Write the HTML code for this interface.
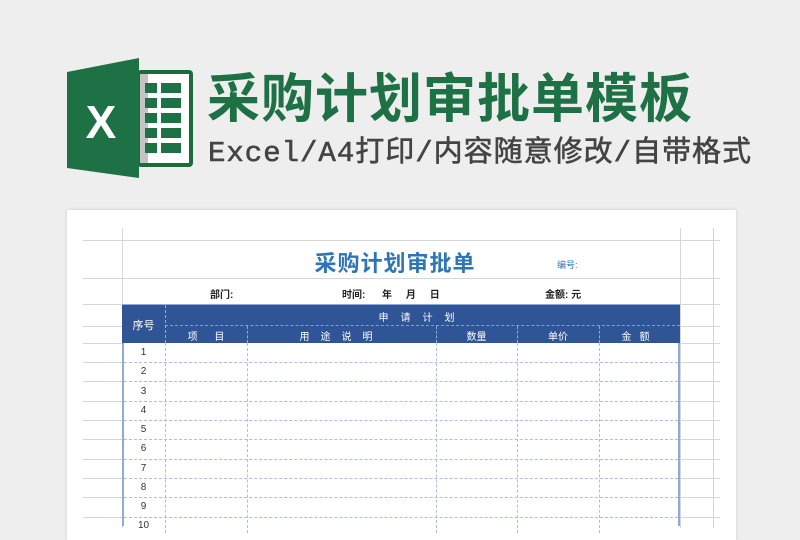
<!DOCTYPE html>
<html><head><meta charset="utf-8"><style>
*{margin:0;padding:0;box-sizing:border-box}
body{width:800px;height:526px;background:#eeeeee;position:relative;overflow:hidden;font-family:"Liberation Sans","Noto Sans CJK SC",sans-serif}
.a{position:absolute;white-space:nowrap}
.h{position:absolute;height:1px;background:#d6d6d6}
.v{position:absolute;width:1px;background:#d6d6d6}
.dh{position:absolute;height:0;border-top:1px dashed #a9bfe6}
.dv{position:absolute;width:0;border-left:1px dashed #a9bfe6}
.wd{position:absolute;width:0;border-left:1px dashed #8faee0}
.t{font-size:10px;color:#fff;position:absolute;text-align:center}
.n{position:absolute;left:122px;width:43px;text-align:center;font-size:10px;color:#333}
</style></head><body>
<svg class="a" style="left:0;top:0" width="200" height="200" viewBox="0 0 200 200">
<rect x="137" y="70" width="56" height="97" rx="4" fill="#1d6b3c"/>
<rect x="140" y="74" width="49" height="89" fill="#fff"/>
<rect x="140" y="74" width="8" height="89" fill="#c4c4c4"/>
<g fill="#1e7145">
<rect x="145" y="83" width="12" height="10"/><rect x="161" y="83" width="20" height="10"/>
<rect x="145" y="98" width="12" height="10"/><rect x="161" y="98" width="20" height="10"/>
<rect x="145" y="113" width="12" height="10"/><rect x="161" y="113" width="20" height="10"/>
<rect x="145" y="128" width="12" height="10"/><rect x="161" y="128" width="20" height="10"/>
<rect x="145" y="143" width="12" height="10"/><rect x="161" y="143" width="20" height="10"/>
</g>
<polygon points="67,72 139,58 139,178 67,168" fill="#1e7145"/>
<text x="101" y="138" font-family="Liberation Sans" font-weight="bold" font-size="46" fill="#fff" text-anchor="middle">X</text>
</svg>
<div class="a" style="left:207px;top:68px;font-size:53px;font-weight:bold;color:#1e7145;letter-spacing:1px;line-height:64px">采购计划审批单模板</div>
<div class="a" style="left:208px;top:136px;font-size:29px;color:#444;line-height:36px;font-family:'Liberation Mono','Noto Sans CJK SC',monospace;letter-spacing:1px;-webkit-text-stroke:0.6px #444">Excel/A4打印/内容随意修改/自带格式</div>

<div class="a" style="left:67px;top:210px;width:669px;height:330px;background:#fff;box-shadow:0 0 3px rgba(0,0,0,.15)"></div>
<div class="v" style="left:122px;top:228px;height:300px"></div>
<div class="v" style="left:680px;top:228px;height:300px"></div>
<div class="v" style="left:713px;top:228px;height:300px"></div>
<div class="h" style="left:83px;top:240px;width:637px"></div>
<div class="h" style="left:83px;top:278px;width:637px"></div>
<div class="h" style="left:83px;top:304px;width:637px"></div>
<div class="h" style="left:83px;top:326px;width:637px"></div>
<div class="h" style="left:83px;top:343px;width:637px"></div>
<div class="h" style="left:83px;top:362px;width:637px"></div>
<div class="h" style="left:83px;top:381px;width:637px"></div>
<div class="h" style="left:83px;top:401px;width:637px"></div>
<div class="h" style="left:83px;top:420px;width:637px"></div>
<div class="h" style="left:83px;top:439px;width:637px"></div>
<div class="h" style="left:83px;top:459px;width:637px"></div>
<div class="h" style="left:83px;top:478px;width:637px"></div>
<div class="h" style="left:83px;top:497px;width:637px"></div>
<div class="h" style="left:83px;top:517px;width:637px"></div>

<div class="a" style="left:300px;top:246px;width:190px;text-align:center;font-size:22px;font-weight:bold;color:#2e75b6;letter-spacing:1px">采购计划审批单</div>
<div class="a" style="left:557px;top:258px;font-size:9px;color:#2e75b6">编号:</div>
<div class="a" style="left:210px;top:286px;font-size:10px;color:#222;font-weight:bold">部门:</div>
<div class="a" style="left:342px;top:286px;font-size:10px;color:#222;font-weight:bold">时间:&nbsp;&nbsp;&nbsp;&nbsp;&nbsp;&nbsp;年&nbsp;&nbsp;&nbsp;&nbsp;&nbsp;月&nbsp;&nbsp;&nbsp;&nbsp;&nbsp;日</div>
<div class="a" style="left:545px;top:286px;font-size:10px;color:#222;font-weight:bold">金额: 元</div>

<div class="a" style="left:122px;top:304px;width:558px;height:222px;background:#fff;border-left:2px solid #8eaadb;border-right:2px solid #8eaadb"></div>
<div class="a" style="left:122px;top:304px;width:558px;height:39px;background:#2f5597;border-top:1px solid #8eaadb"></div>
<div class="dh" style="left:165px;top:325px;width:515px;border-color:#7f9fd6"></div>
<div class="wd" style="left:165px;top:305px;height:38px"></div>
<div class="wd" style="left:247px;top:326px;height:17px"></div>
<div class="wd" style="left:436px;top:326px;height:17px"></div>
<div class="wd" style="left:517px;top:326px;height:17px"></div>
<div class="wd" style="left:599px;top:326px;height:17px"></div>
<div class="t" style="left:122px;top:317px;width:43px;font-size:11px">序号</div>
<div class="t" style="left:165px;top:309px;width:515px;letter-spacing:12px">申请计划</div>
<div class="t" style="left:165px;top:328px;width:82px;word-spacing:14px">项 目</div>
<div class="t" style="left:247px;top:328px;width:189px;letter-spacing:11px">用途说明</div>
<div class="t" style="left:436px;top:328px;width:81px">数量</div>
<div class="t" style="left:517px;top:328px;width:82px">单价</div>
<div class="t" style="left:599px;top:328px;width:81px;letter-spacing:8px">金额</div>

<div class="dv" style="left:165px;top:343px;height:190px"></div>
<div class="dv" style="left:247px;top:343px;height:190px"></div>
<div class="dv" style="left:436px;top:343px;height:190px"></div>
<div class="dv" style="left:517px;top:343px;height:190px"></div>
<div class="dv" style="left:599px;top:343px;height:190px"></div>
<div class="dh" style="left:124px;top:362px;width:554px"></div>
<div class="dh" style="left:124px;top:381px;width:554px"></div>
<div class="dh" style="left:124px;top:401px;width:554px"></div>
<div class="dh" style="left:124px;top:420px;width:554px"></div>
<div class="dh" style="left:124px;top:439px;width:554px"></div>
<div class="dh" style="left:124px;top:459px;width:554px"></div>
<div class="dh" style="left:124px;top:478px;width:554px"></div>
<div class="dh" style="left:124px;top:497px;width:554px"></div>
<div class="dh" style="left:124px;top:517px;width:554px"></div>
<div class="n" style="top:347px">1</div>
<div class="n" style="top:366px">2</div>
<div class="n" style="top:386px">3</div>
<div class="n" style="top:405px">4</div>
<div class="n" style="top:424px">5</div>
<div class="n" style="top:443px">6</div>
<div class="n" style="top:463px">7</div>
<div class="n" style="top:482px">8</div>
<div class="n" style="top:501px">9</div>
<div class="n" style="top:520px">10</div>
</body></html>
